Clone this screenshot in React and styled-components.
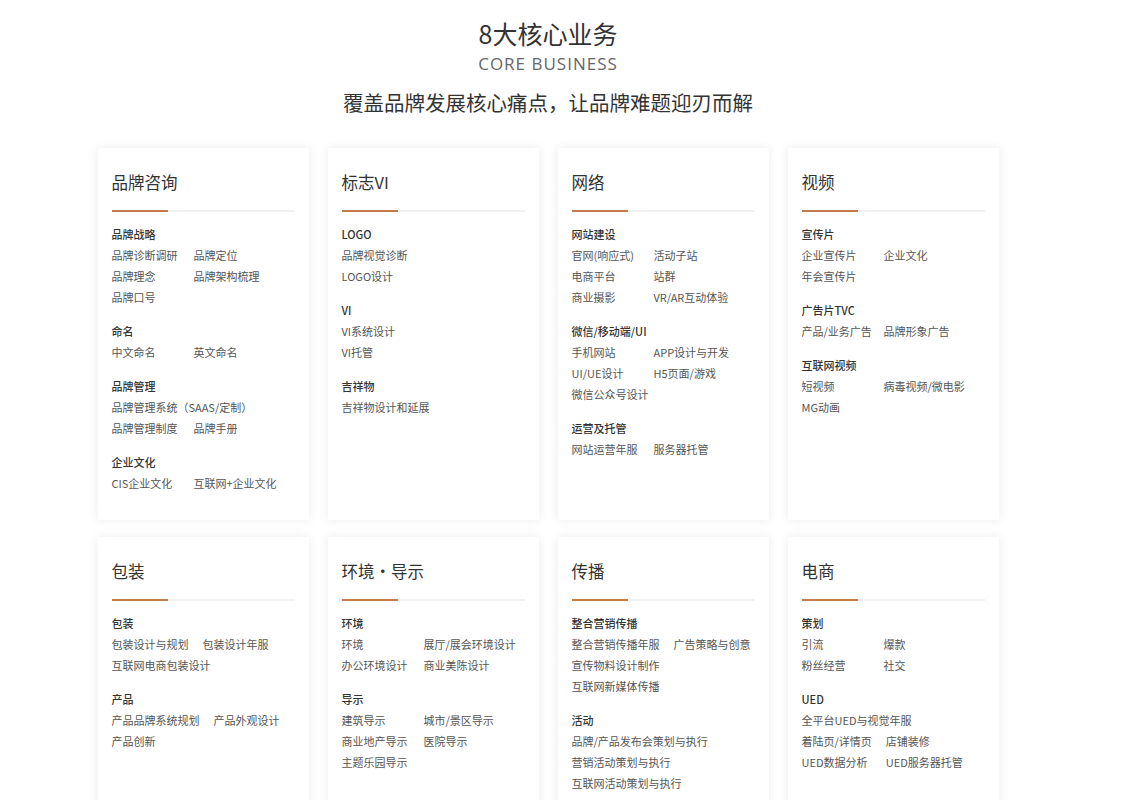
import React from "react";
import styled, { createGlobalStyle } from "styled-components";

const G = createGlobalStyle`
  html,body{margin:0;padding:0;background:#fff;}
  body{font-family:"Microsoft YaHei","Noto Sans CJK SC",sans-serif;color:#333;}
`;
const Page = styled.div`width:1096px;height:800px;overflow:hidden;display:flex;flex-direction:column;align-items:center;`;
const H1 = styled.h1`margin:16px 0 0;font-size:25px;font-weight:400;line-height:34px;color:#333;`;
const En = styled.div`font-size:17px;letter-spacing:1px;color:#666;margin-top:2px;line-height:24px;font-family:"Open Sans","Noto Sans",sans-serif;`;
const Sub = styled.div`font-size:20.5px;color:#333;margin-top:11px;line-height:30px;`;
const Grid = styled.div`display:grid;grid-template-columns:repeat(4,211px);column-gap:19px;row-gap:17px;margin-top:31px;`;
const Card = styled.div`background:#fff;box-shadow:0 0 10px rgba(0,0,0,0.08);padding:22px 14px 24px;height:${p=>p.h}px;box-sizing:border-box;`;
const Title = styled.div`font-size:16.5px;line-height:24px;color:#333;`;
const Rule = styled.div`margin-top:16px;height:2px;background:#f1f1f1;position:relative;margin-bottom:12px;
  &::before{content:"";position:absolute;left:0;top:0;height:2px;width:56px;background:#c47b4c;}`;
const Sec = styled.div`margin-bottom:13px;`;
const Head = styled.div`font-size:11px;font-weight:500;color:#333;line-height:21px;`;
const Items = styled.div`display:grid;grid-template-columns:${p=>p.wide?"max-content max-content":"82px auto"};column-gap:${p=>p.wide?"14px":"0"};`;
const Item = styled.div`font-size:11px;color:#555;line-height:21px;white-space:nowrap;grid-column:${p=>p.full?"1 / span 2":"auto"};`;

const data = [
  ["品牌咨询",[["品牌战略",["品牌诊断调研","品牌定位","品牌理念","品牌架构梳理","品牌口号"]],["命名",["中文命名","英文命名"]],["品牌管理",["*品牌管理系统（SAAS/定制）","品牌管理制度","品牌手册"]],["企业文化",["CIS企业文化","互联网+企业文化"]]]],
  ["标志VI",[["LOGO",["*品牌视觉诊断","*LOGO设计"]],["VI",["*VI系统设计","*VI托管"]],["吉祥物",["*吉祥物设计和延展"]]]],
  ["网络",[["网站建设",["官网(响应式)","活动子站","电商平台","站群","商业摄影","VR/AR互动体验"]],["微信/移动端/UI",["手机网站","APP设计与开发","UI/UE设计","H5页面/游戏","*微信公众号设计"]],["运营及托管",["网站运营年服","服务器托管"]]]],
  ["视频",[["宣传片",["企业宣传片","企业文化","年会宣传片"]],["广告片TVC",["产品/业务广告","品牌形象广告"]],["互联网视频",["短视频","病毒视频/微电影","MG动画"]]]],
  ["包装",[["包装",["包装设计与规划","包装设计年服","*互联网电商包装设计"]],["产品",["产品品牌系统规划","产品外观设计","产品创新"]]]],
  ["环境·导示",[["环境",["环境","展厅/展会环境设计","办公环境设计","商业美陈设计"]],["导示",["建筑导示","城市/景区导示","商业地产导示","医院导示","主题乐园导示"]]]],
  ["传播",[["整合营销传播",["整合营销传播年服","广告策略与创意","*宣传物料设计制作","*互联网新媒体传播"]],["活动",["*品牌/产品发布会策划与执行","*营销活动策划与执行","*互联网活动策划与执行"]]]],
  ["电商",[["策划",["引流","爆款","粉丝经营","社交"]],["UED",["*全平台UED与视觉年服","着陆页/详情页","店铺装修","UED数据分析","UED服务器托管"]]]],
];
const wide = {"包装设计与规划":1,"产品品牌系统规划":1,"整合营销传播年服":1,"着陆页/详情页":1};

export default function App(){
  return <><G/><Page>
    <H1>8大核心业务</H1>
    <En>CORE BUSINESS</En>
    <Sub>覆盖品牌发展核心痛点，让品牌难题迎刃而解</Sub>
    <Grid>
      {data.map(([t,secs],i)=>(
        <Card key={t} h={i<4?372:300}>
          <Title>{t}</Title>
          <Rule/>
          {secs.map(([h,its])=>(
            <Sec key={h}><Head>{h}</Head>
              <Items wide={its.some(x=>wide[x.replace("*","")])}>
                {its.map(x=><Item key={x} full={x[0]==="*"}>{x.replace("*","")}</Item>)}
              </Items></Sec>
          ))}
        </Card>
      ))}
    </Grid>
  </Page></>;
}
